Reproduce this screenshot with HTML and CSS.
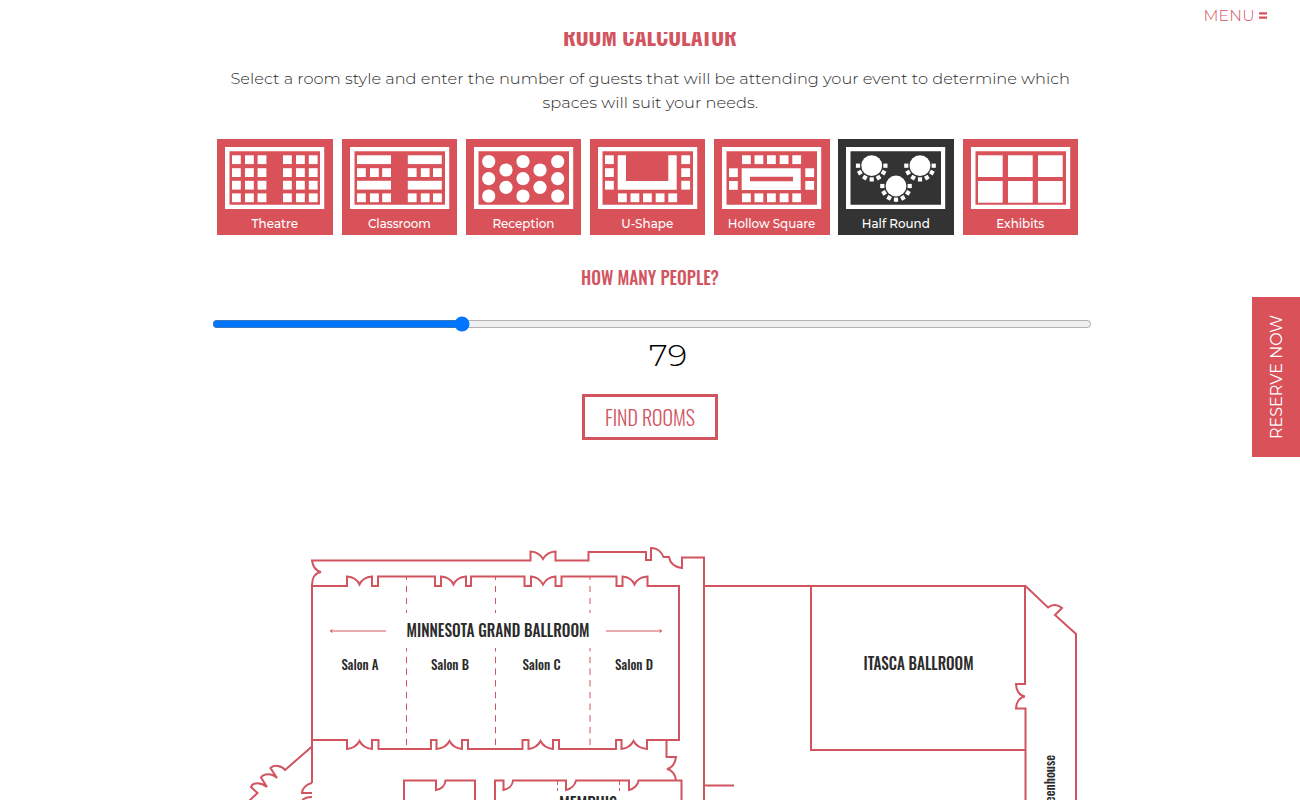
FILE: index.html
```html
<!DOCTYPE html>
<html lang="en">
<head>
<meta charset="utf-8">
<title>Room Calculator</title>
<link rel="stylesheet" href="styles.css">
</head>
<body>
<header class="topbar">
  <svg class="menu" width="70" height="32"><text class="sans menu-label red" x="4.500" y="21" font-size="15.600" textLength="51">MENU</text><path d="M60 13.300h8M60 17.700h8" stroke="#d9525c" stroke-width="2.200"/></svg>
</header>
<aside class="reserve"><svg width="48" height="160"><text class="sans white" transform="translate(30 142) rotate(-90)" font-size="16" textLength="124" lengthAdjust="spacingAndGlyphs">RESERVE NOW</text></svg></aside>
<main class="calculator">
  <h1 class="line title"><svg width="878" height="36"><text class="narrow title-text red" x="350" y="30" font-size="23.500" textLength="174" lengthAdjust="spacingAndGlyphs">ROOM CALCULATOR</text></svg></h1>
  <p class="line intro"><svg width="878" height="56">
    <text class="sans body dark" x="17.500" y="24" font-size="15.700" textLength="839.500" lengthAdjust="spacingAndGlyphs">Select a room style and enter the number of guests that will be attending your event to determine which</text>
    <text class="sans body dark" x="329.500" y="48" font-size="15.700" textLength="215.500" lengthAdjust="spacingAndGlyphs">spaces will suit your needs.</text>
  </svg></p>
  <div class="styles" id="styles"></div>
  <h2 class="line people"><svg width="878" height="36"><text class="narrow semibold red" x="368" y="20" font-size="18.800" textLength="138" lengthAdjust="spacingAndGlyphs">HOW MANY PEOPLE?</text></svg></h2>
  <input class="slider" type="range" min="1" max="280" value="79">
  <div class="line count"><svg width="878" height="44"><text class="sans body black" x="436" y="30" font-size="31" textLength="38" lengthAdjust="spacingAndGlyphs">79</text></svg></div>
  <button class="find"><svg width="130" height="40"><text class="narrow red" x="20" y="28.500" font-size="19.600" textLength="90" lengthAdjust="spacingAndGlyphs">FIND ROOMS</text></svg></button>
  <svg class="map" width="878" height="280" viewBox="213 520 878 280">
    <g fill="none" stroke="#d2545f" stroke-width="2">
      <path d="M312 783V585C312 577 315 573 321 572C317 571 313 568 312 560.500H530.500V551.500Q539 552 543 559Q547 552 555.500 551.500V560.500H588.500V552H646V560H651V548C658 548 662 553 663.500 557H669C670 563 674 567 682 568V557.500H704V801"/>
      <path d="M312 586H347V576.500Q356 577 359.500 584.500Q363 577 372 576.500V586H378V576.500H435V586H441V576.500Q450 577 453.500 584.500Q457 577 466 576.500V586H471V576.500H524.500V586H531V576.500Q539 577 543 584.500Q547 577 555.500 576.500V586H561.500V576.500H616.500V586H622.500V576.500Q631 577 634.500 584.500Q638 577 647.500 576.500V586H679V740H647V749Q637 748 633.500 741Q630 748 621.500 749V740H616V749H559V740H553V749Q544 748 540.500 741Q537 748 528.500 749V740H522.500V749H468V740H462V749Q453 748 449.500 741Q446 748 436.500 749V740H431V749H378.500V740H372V749Q363 748 359.500 741Q356 748 347 749V740H312"/>
      <path d="M666.500 740V757H676C675 764 671 768 667 769C672 770 676 775 676 781"/>
      <path d="M404 801V780.500H436V790C442 789 445 785 445.500 780.500H475V801M495 801V780.500H503.500V790C509 789 512.500 785 513 780.500H566V790C571 789 575 785 576 780.500H629V790C634 789 638 785 638.500 780.500H681.500V801M704 785.500H734"/>
      <path d="M704 586H1025.500L1048 607.500C1052 604 1058 604 1062 608L1055 615L1076 634V801M811 586V750H1025.500M1025 586V684H1016C1016 691 1020 696 1025 696.500C1020 697 1016 702 1016 708.500H1025.500V801"/>
      <path d="M312 746.500L285 770C282 766 274 764 270.500 768L277 778C272 773 264 773 261 777.500L267 787C261 782 253 782 251 787L257.500 793L249 801M312 783C306 784 302 789 302 793H312M312 797Q304 797 302 801"/>
      <path stroke-width="1" d="M330 631H386M606 631H662M332.500 629.500l-2 1.500l2 1.500M659.500 629.500l2 1.500l-2 1.500"/>
      <path stroke-width="1" stroke-dasharray="6 6" stroke-dashoffset="2" d="M406.500 576V613M495.500 576V613M590 576V613"/>
      <path stroke-width="1" stroke-dasharray="6.500 5.200" stroke-dashoffset="3" d="M406.500 648V749M495.500 648V749M590 648V749"/>
      <path stroke-width="1" stroke-dasharray="4 3" d="M557.500 781V791M619.500 781V791"/>
    </g>
    <g class="narrow semibold dark">
      <text x="406.500" y="636.500" font-size="16.500" textLength="183" lengthAdjust="spacingAndGlyphs">MINNESOTA GRAND BALLROOM</text>
      <text x="341.500" y="670" font-size="13" textLength="37" lengthAdjust="spacingAndGlyphs">Salon A</text>
      <text x="431" y="670" font-size="13" textLength="38" lengthAdjust="spacingAndGlyphs">Salon B</text>
      <text x="522.500" y="670" font-size="13" textLength="38" lengthAdjust="spacingAndGlyphs">Salon C</text>
      <text x="615" y="670" font-size="13" textLength="38" lengthAdjust="spacingAndGlyphs">Salon D</text>
      <text x="863.500" y="670" font-size="16.500" textLength="110" lengthAdjust="spacingAndGlyphs">ITASCA BALLROOM</text>
      <text x="559" y="809.500" font-size="16.500" textLength="58" lengthAdjust="spacingAndGlyphs">MEMPHIS</text>
      <text transform="translate(1055 814) rotate(-90)" font-size="12.800" textLength="59" lengthAdjust="spacingAndGlyphs">Greenhouse</text>
    </g>
  </svg>
</main>
<script src="cards.js"></script>
</body>
</html>
```
FILE: styles.css
```css
* { box-sizing: border-box; }
html, body { height: 100%; }
body { margin: 0; overflow: hidden; background: #fff; }
svg { display: block; overflow: visible; }
.sans { font-family: Montserrat, Inter, sans-serif; font-weight: 400; }
.body, .menu-label { font-weight: 350; }
.label { font-weight: 500; }
.narrow { font-family: Oswald, "Liberation Sans Narrow", Roboto, sans-serif; font-weight: 350; }
.semibold { font-weight: 500; }
.title-text { font-weight: 600; }
.red { fill: #d2545f; }
.white { fill: #fff; }
.dark { fill: #2b2b2b; }
.black { fill: #000; }
.topbar { position: fixed; top: 0; left: 0; right: 0; height: 32px; padding-right: 31px; display: flex; justify-content: flex-end; background: #fff; z-index: 2; }
.reserve { position: fixed; right: 0; top: 297px; width: 48px; height: 160px; background: #d9525a; z-index: 2; }
.calculator { width: 878px; margin-left: 213px; padding-top: 16px; display: flex; flex-direction: column; }
.line { margin: 0; }
.title { height: 44px; }
.intro { height: 79px; }
.styles { display: grid; grid-template-columns: repeat(7, 115.5px); column-gap: 8.7px; margin-left: 4.4px; height: 96px; }
.card { background: #d9525a; height: 96px; }
.card.active { background: #333; }
.people { height: 51px; margin-top: 30px; }
.slider { width: 880px; height: 16px; margin: 0 0 0 -1px; }
.count { height: 36px; margin-top: 4px; }
.find { width: 136px; height: 46px; padding: 0; margin: 22px 0 0 369px; border: 3px solid #d2545f; background: #fff; }
.map { margin-top: 80px; flex: none; overflow: hidden; }
```
FILE: cards.js
```js
// Room layout icons are drawn on a 100 x 62 grid inside each card.
const rect = (x, y, w, h) => `<rect x="${x}" y="${y}" width="${w}" height="${h}"/>`;
const squares = (xs, ys) => ys.map(y => xs.map(x => rect(x, y, 8.8, 8.8)).join('')).join('');
const circle = (x, y, r) => `<circle cx="${x}" cy="${y}" r="${r}"/>`;
const rows = [8.3, 21.2, 33.8, 46.4];
const six = [7, 20, 32.6, 58, 71, 83.8];
const five = [20, 32.5, 45, 57.7, 70.3];
const halfRound = (x, y) => {
  let s = circle(x, y, 10.4);
  for (let a = 0; a <= 180; a += 30) s += `<rect x="11.6" y="-2.1" width="4.2" height="4.2" transform="translate(${x} ${y}) rotate(${a})"/>`;
  return s;
};
const cards = [
  ['Theatre', 34.6, 46.5, squares(six, rows)],
  ['Classroom', 25.9, 63, [8.3, 33.8].map(y => rect(7, y, 34, 8.8) + rect(57.8, y, 34, 8.8)).join('') + squares([7, 20, 32.2, 57.8, 70.8, 83], [21.2, 46.4])],
  ['Reception', 26.4, 62, [14.7, 49, 83.7].map(x => [14.5, 31.7, 49].map(y => circle(x, y, 6.6)).join('')).join('') + [32, 66].map(x => circle(x, 23, 6.6) + circle(x, 40.3, 6.6)).join('')],
  ['U-Shape', 31.3, 52, squares([7, 83.3], rows.slice(0, 3)) + squares(five, [46.4]) + '<path d="M19.700 8.300H28V34H70.300V8.300H78.700V42.700H19.700Z"/>'],
  ['Hollow Square', 13.8, 87.5, squares(five, [8.3, 46.4]) + squares([7, 83.3], [21.3, 34]) + '<path fill-rule="evenodd" d="M19.700 21.300H78.700V43H19.700ZM28 29.700V34.300H71V29.700Z"/>'],
  ['Half Round', 23.8, 68, halfRound(25.7, 18.7) + halfRound(74, 18.7) + halfRound(50, 39)],
  ['Exhibits', 33.3, 48, [7, 37, 67].map(x => rect(x, 8.3, 24.7, 21.7) + rect(x, 34, 24.7, 21.7)).join('')]
];
document.getElementById('styles').innerHTML = cards.map(([name, x, w, icon]) =>
  `<div class="card${name === 'Half Round' ? ' active' : ''}"><svg width="115.5" height="96"><g fill="#fff" transform="translate(8 8)"><path fill-rule="evenodd" d="M0 0H99.200V62H0ZM4.500 4.300V57.700H95V4.300Z"/>${icon}</g><text class="sans label white" x="${x}" y="89" font-size="12.500" textLength="${w}" lengthAdjust="spacingAndGlyphs">${name}</text></svg></div>`).join('');
```
